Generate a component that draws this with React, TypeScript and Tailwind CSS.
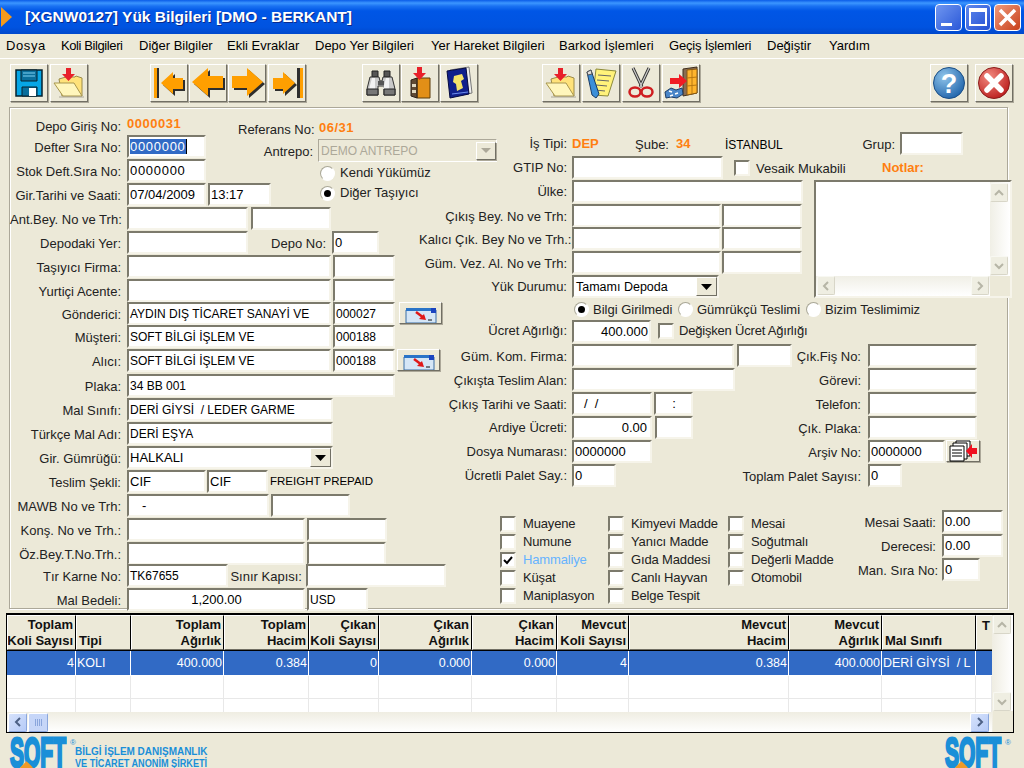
import type { ReactNode } from "react";

const sunken =
  "border-2 border-t-[#7c7a6c] border-l-[#7c7a6c] border-r-[#f6f4ea] border-b-[#f6f4ea] bg-white";
const raised =
  "border border-t-white border-l-white border-r-[#716f64] border-b-[#716f64] shadow-[1px_1px_0_#aca899] bg-[#ece9d8]";
const orange = "font-bold text-[#ff7f10]";

function Lbl({ className = "", children }: { className?: string; children: ReactNode }) {
  return (
    <div className={`shrink-0 whitespace-nowrap text-right pt-[5px] text-[#222] ${className}`}>
      {children}
    </div>
  );
}

function Field({ className = "", children }: { className?: string; children?: ReactNode }) {
  return (
    <div className={`${sunken} h-[23px] shrink-0 flex items-center overflow-hidden whitespace-nowrap pl-px text-black ${className}`}>
      {children}
    </div>
  );
}

function LRow({ label, h = "h-[24px]", lc = "", children }: { label: string; h?: string; lc?: string; children?: ReactNode }) {
  return (
    <div className={`flex ${h}`}>
      <Lbl className={`w-[111px] mr-[6px] ${lc}`}>{label}</Lbl>
      {children}
    </div>
  );
}

function RRow({ label, h = "h-[24px]", lc = "", children }: { label: string; h?: string; lc?: string; children?: ReactNode }) {
  return (
    <div className={`flex ${h}`}>
      <Lbl className={`w-[148px] mr-[5px] ${lc}`}>{label}</Lbl>
      {children}
    </div>
  );
}

// row of the right form part that also has a second label + field at x=868
function PRow({ label, label2, lc = "", field2, children }: { label: string; label2: string; lc?: string; field2: ReactNode; children?: ReactNode }) {
  return (
    <div className="flex h-[24px] w-[558px]">
      <Lbl className={`w-[148px] mr-[5px] ${lc}`}>{label}</Lbl>
      <div className="flex flex-1">{children}</div>
      <Lbl className="mr-[7px]">{label2}</Lbl>
      <div className="w-[109px] shrink-0 flex">{field2}</div>
    </div>
  );
}

function Radio({ on = false }: { on?: boolean }) {
  return (
    <span className="w-[15px] h-[15px] shrink-0 rounded-full bg-white border border-[#a9a796] border-b-white border-r-white flex items-center justify-center">
      {on && <span className="w-[7px] h-[7px] rounded-full bg-black" />}
    </span>
  );
}

function Check({ on = false }: { on?: boolean }) {
  return (
    <span className={`${sunken} w-[16px] h-[16px] shrink-0 flex items-center justify-center`}>
      {on && (
        <svg width="10" height="10" viewBox="0 0 10 10">
          <path d="M1 5l3 3 5-6" fill="none" stroke="#000" strokeWidth="2" />
        </svg>
      )}
    </span>
  );
}

function CheckRow({ label, on, className = "" }: { label: string; on?: boolean; className?: string }) {
  return (
    <div className="flex h-[18px] items-center">
      <Check on={on} />
      <span className={`ml-[7px] whitespace-nowrap tracking-[-0.15px] text-[#222] ${className}`}>{label}</span>
    </div>
  );
}

function DropBtn() {
  return (
    <span className={`${raised} ml-auto w-[21px] h-[19px] shrink-0 flex items-center justify-center`}>
      <svg width="11" height="6" viewBox="0 0 11 6">
        <path d="M0 0h11L5.500 6z" fill="#000" />
      </svg>
    </span>
  );
}

function Chevron({ d, color = "#b6b5a6" }: { d: string; color?: string }) {
  return (
    <svg width="10" height="10" viewBox="0 0 10 10">
      <path d={d} fill="none" stroke={color} strokeWidth="2" />
    </svg>
  );
}

const up = "M1 7l4-4 4 4";
const down = "M1 3l4 4 4-4";
const left = "M7 1L3 5l4 4";
const right = "M3 1l4 4-4 4";

function GhostBtn({ d }: { d: string }) {
  return (
    <span className="w-[18px] h-[19px] shrink-0 rounded-[2px] border border-[#f8f8f2] border-r-[#d8d6c8] border-b-[#d8d6c8] bg-[#efeee2] flex items-center justify-center">
      <Chevron d={d} />
    </span>
  );
}

function BlueBtn({ d }: { d: string }) {
  return (
    <span className="w-[19px] h-[19px] shrink-0 rounded-[2px] border border-white border-r-[#8aa6dc] border-b-[#8aa6dc] bg-[linear-gradient(135deg,#d6e2fb,#b6cbf8)] flex items-center justify-center">
      <Chevron d={d} color="#4d6185" />
    </span>
  );
}

function ToolBtn({ className = "", children }: { className?: string; children: ReactNode }) {
  return (
    <div className={`${raised} w-[38px] h-[38px] shrink-0 flex items-center justify-center ${className}`}>
      {children}
    </div>
  );
}

function SaveIcon() {
  return (
    <svg width="32" height="32" viewBox="0 0 32 32">
      <path d="M3 3h26v26H3z" fill="#06a6e6" stroke="#06222e" strokeWidth="1.500" />
      <path d="M8 3h16v11H8z" fill="#0a6f9c" stroke="#06222e" />
      <path d="M10 6h12M10 9h12" stroke="#7fd2f2" />
      <path d="M9 20h15v9H9z" fill="#0a6f9c" stroke="#06222e" />
      <path d="M16 21h7v8h-7z" fill="#fff" />
    </svg>
  );
}

function FolderIcon() {
  return (
    <svg width="34" height="32" viewBox="0 0 34 32">
      <path d="M7 12l7-2h9l1-1 6 2v18H10z" fill="#ffe27a" stroke="#9a8a48" />
      <path d="M2 16h20l8 13H11z" fill="#fff6bc" stroke="#a8964e" />
      <path d="M14 1h5v6h4l-6.500 7L10 7h4z" fill="#e8202a" />
      <path d="M7 30h25" stroke="#aca899" />
    </svg>
  );
}

function NavIcon({ kind }: { kind: "first" | "prev" | "next" | "last" }) {
  const arrow = {
    first: "10,18 22,7 22,13 32,13 32,24 22,24 22,29",
    prev: "2,17 18,3 18,11 33,11 33,23 18,23 18,31",
    next: "34,17 18,3 18,11 3,11 3,23 18,23 18,31",
    last: "26,18 14,7 14,13 4,13 4,24 14,24 14,29",
  }[kind];
  return (
    <svg width="36" height="36" viewBox="0 0 36 36">
      <polygon points={arrow} fill="#2e2e2e" transform="translate(2,2)" />
      <polygon points={arrow} fill="#ff9f00" />
      {kind === "first" && (
        <>
          <rect x="3" y="3" width="3" height="30" fill="#ff9f00" />
          <rect x="6" y="3" width="2" height="30" fill="#2e2e2e" />
        </>
      )}
      {kind === "last" && (
        <>
          <rect x="28" y="3" width="3" height="30" fill="#2e2e2e" />
          <rect x="31" y="3" width="3" height="30" fill="#ff9f00" />
        </>
      )}
    </svg>
  );
}

function BinocularsIcon() {
  return (
    <svg width="34" height="32" viewBox="0 0 34 32">
      <path d="M8 4h6v6H8zM20 4h6v6h-6z" fill="#555" stroke="#222" />
      <path d="M6 10h9l1 4h2l1-4h9l3 12v6H20v-9h-6v9H3v-6z" fill="#c9c9c9" stroke="#333" />
      <path d="M8 11h3v11H5zM22 11h3v11h-6z" fill="#f2f2f2" />
      <path d="M3 22h11v6H3zM20 22h11v6H20z" fill="#777" stroke="#222" />
      <path d="M14 14h6v4h-6z" fill="#555" />
    </svg>
  );
}

function BoxIcon() {
  return (
    <svg width="30" height="34" viewBox="0 0 30 34">
      <path d="M12 12h13v20H12z" fill="#e28f17" stroke="#5d3c0a" />
      <path d="M6 14l6-2v20l-6-2z" fill="#5f4a34" stroke="#2b2018" />
      <path d="M7 18h4v3H7zM7 24h4v3H7z" fill="#e0d8c0" />
      <path d="M12 1h5v6h4l-6.500 7L8 7h4z" fill="#e8202a" />
    </svg>
  );
}

function BookIcon() {
  return (
    <svg width="30" height="34" viewBox="0 0 30 34">
      <path d="M6 4l19-3 3 26-20 4z" fill="#eee" stroke="#777" />
      <path d="M3 5l19-3 3 26-19 4z" fill="#10208c" stroke="#050a40" />
      <path d="M10 10l8-2 2 5-3 2 2 7-6 3-1-7-3-2z" fill="#f5e36a" />
      <path d="M8 28l16-2" stroke="#6d8df0" />
    </svg>
  );
}

function NoteIcon() {
  return (
    <svg width="34" height="34" viewBox="0 0 34 34">
      <path d="M12 3l20 2-8 25-15-1z" fill="#fff27a" stroke="#8c8a3a" />
      <path d="M14 9l13 1M13 14l12 1M12 19l11 1M11 24l10 1" stroke="#666" />
      <path d="M3 6l4-2 8 24-3 4-4-3z" fill="#3c8fd8" stroke="#1b3c66" />
      <path d="M3 6l4-2 1 4-4 1z" fill="#ddd" stroke="#555" />
    </svg>
  );
}

function ScissorsIcon() {
  return (
    <svg width="30" height="34" viewBox="0 0 30 34">
      <path d="M7 2l9 19M23 2l-9 19" stroke="#333" strokeWidth="3" />
      <path d="M7 2l9 19M23 2l-9 19" stroke="#ccc" strokeWidth="1.200" />
      <ellipse cx="9" cy="26" rx="5.500" ry="4.500" fill="none" stroke="#cf1d20" strokeWidth="2.500" />
      <ellipse cx="21" cy="26" rx="5.500" ry="4.500" fill="none" stroke="#cf1d20" strokeWidth="2.500" />
    </svg>
  );
}

function DoorIcon() {
  return (
    <svg width="36" height="34" viewBox="0 0 36 34">
      <path d="M20 3l14-2v26l-14 3z" fill="#8a6d52" stroke="#3f2e1e" />
      <path d="M24 4l10-1v24l-10 2z" fill="#ffb52e" stroke="#8a5a10" />
      <path d="M29 4v24M24 12l10-1M24 20l10-1" stroke="#b87812" />
      <path d="M7 12h9V8l8 7-8 7v-4H7z" fill="#f01c24" />
      <path d="M2 26l6-4 5 2 6-2 1 6-6 4-6-1-5 1z" fill="#4a86c8" stroke="#1c3c66" />
      <path d="M6 25l3 1M12 28l3-1M7 30l3-1" stroke="#fff" strokeWidth="1.500" />
    </svg>
  );
}

function HelpIcon() {
  return (
    <svg width="34" height="34" viewBox="0 0 34 34">
      <defs>
        <radialGradient id="hb" cx="0.350" cy="0.300" r="0.800">
          <stop offset="0" stopColor="#8fc4ea" />
          <stop offset="1" stopColor="#1a5fa8" />
        </radialGradient>
      </defs>
      <circle cx="17" cy="17" r="15.500" fill="url(#hb)" stroke="#1c4f86" />
      <text x="17" y="27" textAnchor="middle" fontSize="27" fontWeight="700" fill="#fff">?</text>
    </svg>
  );
}

function CloseIcon() {
  return (
    <svg width="34" height="34" viewBox="0 0 34 34">
      <defs>
        <radialGradient id="cb" cx="0.350" cy="0.300" r="0.800">
          <stop offset="0" stopColor="#f28a80" />
          <stop offset="1" stopColor="#b81818" />
        </radialGradient>
      </defs>
      <circle cx="17" cy="17" r="15.500" fill="url(#cb)" stroke="#8a1c1c" />
      <path d="M10 10l14 14M24 10L10 24" stroke="#fff" strokeWidth="5.500" strokeLinecap="round" />
    </svg>
  );
}

function WinArrowIcon() {
  return (
    <svg width="32" height="16" viewBox="0 0 32 16">
      <path d="M1 3h30v13H1z" fill="#d5e6f6" stroke="#3a6ea5" />
      <path d="M1 1h30v3H1z" fill="#2a74c8" />
      <path d="M26 1h5v5h-5z" fill="#1a44c0" />
      <path d="M11 5l8 6" stroke="#e01818" strokeWidth="2.500" />
      <path d="M21 13l-7-1 5-5z" fill="#e01818" />
      <path d="M23 13h4" stroke="#111" />
    </svg>
  );
}

function DocsIcon() {
  return (
    <svg width="30" height="22" viewBox="0 0 30 22">
      <path d="M8 1h14v15H8z" fill="#fff" stroke="#000" />
      <path d="M5 3h14v16H5z" fill="#fff" stroke="#000" />
      <path d="M2 6h14v15H2z" fill="#fff" stroke="#000" />
      <path d="M4 10h10M4 13h10M4 16h10" stroke="#000" />
      <path d="M29 8v6h-5v4l-6-7 6-7v4z" fill="#f01020" />
    </svg>
  );
}

function Logo() {
  return (
    <div className="relative w-[64px] h-[30px] shrink-0">
      <span className="block w-[56px] origin-top-left scale-x-[0.5] text-[42px] leading-[30px] font-bold whitespace-nowrap text-[#1a8fd8] [-webkit-text-stroke:3px_#1a8fd8]">
        SOFT
      </span>
      <span className="absolute left-[12px] top-[25px] w-[9px] h-[9px] rotate-45 bg-[#f09a28]" />
      <span className="absolute right-[-2px] top-[1px] text-[8px] leading-[8px] text-[#1a8fd8]">®</span>
    </div>
  );
}

const menus = [
  { name: "Dosya", className: "w-[40px] tracking-[0.6px]" },
  { name: "Koli Bilgileri", className: "w-[63px] tracking-[-0.4px]" },
  { name: "Diğer Bilgiler", className: "w-[73px]" },
  { name: "Ekli Evraklar", className: "w-[73px]" },
  { name: "Depo Yer Bilgileri", className: "w-[101px]" },
  { name: "Yer Hareket Bilgileri", className: "w-[113px]" },
  { name: "Barkod İşlemleri", className: "w-[95px] tracking-[0.1px]" },
  { name: "Geçiş İşlemleri", className: "w-[83px] tracking-[-0.2px]" },
  { name: "Değiştir", className: "w-[47px]" },
  { name: "Yardım", className: "w-[41px]" },
];

const columns = [
  { top: "Toplam", bottom: "Koli Sayısı", value: "4" },
  { top: "", bottom: "Tipi", value: "KOLI", start: true },
  { top: "Toplam", bottom: "Ağırlık", value: "400.000" },
  { top: "Toplam", bottom: "Hacim", value: "0.384" },
  { top: "Çıkan", bottom: "Koli Sayısı", value: "0" },
  { top: "Çıkan", bottom: "Ağırlık", value: "0.000" },
  { top: "Çıkan", bottom: "Hacim", value: "0.000" },
  { top: "Mevcut", bottom: "Koli Sayısı", value: "4" },
  { top: "Mevcut", bottom: "Hacim", value: "0.384" },
  { top: "Mevcut", bottom: "Ağırlık", value: "400.000" },
  { top: "", bottom: "Mal Sınıfı", value: "DERİ GİYSİ  / L", start: true },
  { top: "T", bottom: "", value: "" },
];
const gridCols =
  "grid grid-cols-[69px_55px_93px_85px_70px_93px_85px_72px_160px_93px_94px_16px]";

export default function App() {
  return (
    <div className="w-[1024px] h-[768px] overflow-hidden flex flex-col bg-[#ece9d8] text-[13px] leading-[16px] font-['Liberation_Sans',Arial,sans-serif]">
      {/* Title bar */}
      <div className="h-[34px] shrink-0 flex items-center bg-[linear-gradient(180deg,#0a5ce8_0%,#3c96ff_9%,#1a72f2_18%,#0056e6_32%,#0053e0_80%,#0048cc_100%)]">
        <svg width="12" height="20" viewBox="0 0 12 20" className="ml-px">
          <path d="M0 0l11 10L0 20z" fill="#f49a1c" />
        </svg>
        <span className="ml-[12px] text-[15.500px] font-bold text-white [text-shadow:1px_1px_0_#0a2a8c] whitespace-nowrap">
          [XGNW0127] Yük Bilgileri [DMO - BERKANT]
        </span>
        <div className="ml-auto mr-[3px] flex gap-[3px]">
          <div className="w-[27px] h-[27px] rounded-[4px] border border-white bg-[linear-gradient(135deg,#6f96f0,#2a58d8)] flex items-end p-[4px] pl-[5px]">
            <span className="w-[11px] h-[3px] bg-white" />
          </div>
          <div className="w-[26px] h-[27px] rounded-[4px] border border-white bg-[linear-gradient(135deg,#5f88ec,#2450d4)] flex items-center justify-center">
            <span className="w-[18px] h-[18px] border-2 border-t-[4px] border-white" />
          </div>
          <div className="w-[27px] h-[27px] rounded-[4px] border border-white bg-[linear-gradient(135deg,#ef9a7c,#c8401a)] flex items-center justify-center">
            <svg width="19" height="19" viewBox="0 0 19 19">
              <path d="M2 2l15 15M17 2L2 17" stroke="#fff" strokeWidth="3.500" />
            </svg>
          </div>
        </div>
      </div>

      {/* Menu */}
      <div className="h-[25px] shrink-0 flex items-center gap-[15px] pl-[6px] border-b border-white text-black">
        {menus.map((m) => (
          <span key={m.name} className={`whitespace-nowrap ${m.className}`}>{m.name}</span>
        ))}
      </div>

      {/* Toolbar */}
      <div className="h-[48px] shrink-0 flex pl-[10px] pt-[5px]">
        <ToolBtn><SaveIcon /></ToolBtn>
        <ToolBtn className="ml-[2px]"><FolderIcon /></ToolBtn>
        <ToolBtn className="ml-[62px]"><NavIcon kind="first" /></ToolBtn>
        <ToolBtn className="ml-px"><NavIcon kind="prev" /></ToolBtn>
        <ToolBtn className="ml-px"><NavIcon kind="next" /></ToolBtn>
        <ToolBtn className="ml-[2px]"><NavIcon kind="last" /></ToolBtn>
        <ToolBtn className="ml-[56px]"><BinocularsIcon /></ToolBtn>
        <ToolBtn className="ml-px"><BoxIcon /></ToolBtn>
        <ToolBtn className="ml-px"><BookIcon /></ToolBtn>
        <ToolBtn className="ml-[64px]"><FolderIcon /></ToolBtn>
        <ToolBtn className="ml-[2px]"><NoteIcon /></ToolBtn>
        <ToolBtn className="ml-[2px]"><ScissorsIcon /></ToolBtn>
        <ToolBtn className="ml-[2px]"><DoorIcon /></ToolBtn>
        <ToolBtn className="ml-[230px]"><HelpIcon /></ToolBtn>
        <ToolBtn className="ml-[7px]"><CloseIcon /></ToolBtn>
      </div>

      {/* Form panel */}
      <div className="ml-[9px] w-[999px] h-[502px] shrink-0 flex border border-[#aca899] shadow-[inset_1px_1px_0_#fff,1px_1px_0_#fff]">
        {/* Left part */}
        <div className="w-[409px] shrink-0">
          <div className="flex h-[99px]">
            <div className="w-[228px] shrink-0 pt-[8px]">
              <LRow label="Depo Giriş No:" h="h-[19px]" lc="!pt-[3px]">
                <span className={`${orange} tracking-[0.5px]`}>0000031</span>
              </LRow>
              <LRow label="Defter Sıra No:">
                <Field className="w-[79px]">
                  <span className="bg-[#316ac5] text-white tracking-[0.7px] leading-[15px] border-r border-black">0000000</span>
                </Field>
              </LRow>
              <LRow label="Stok Deft.Sıra No:">
                <Field className="w-[79px] tracking-[0.7px]">0000000</Field>
              </LRow>
              <LRow label="Gir.Tarihi ve Saati:">
                <Field className="w-[79px]">07/04/2009</Field>
                <Field className="w-[63px] ml-[2px]">13:17</Field>
              </LRow>
            </div>
            <div className="pt-[11px]">
              <div className="flex h-[20px]">
                <Lbl className="w-[75px] mr-[6px] !pt-[3px]">Referans No:</Lbl>
                <span className={`${orange} tracking-[0.5px] pt-px`}>06/31</span>
              </div>
              <div className="flex h-[24px]">
                <Lbl className="w-[75px] mr-[5px]">Antrepo:</Lbl>
                <div className="w-[179px] h-[23px] flex items-center border border-[#aca899] border-r-white border-b-white pl-[2px] text-[12px] text-[#aca899]">
                  DEMO ANTREPO
                  <span className={`${raised} ml-auto w-[20px] h-[18px] flex items-center justify-center`}>
                    <svg width="10" height="5" viewBox="0 0 10 5">
                      <path d="M0 0h10L5 5z" fill="#aca899" />
                    </svg>
                  </span>
                </div>
              </div>
              <div className="flex h-[20px] items-center pl-[82px]">
                <Radio />
                <span className="ml-[5px] text-[#222] whitespace-nowrap">Kendi Yükümüz</span>
              </div>
              <div className="flex h-[20px] items-center pl-[82px]">
                <Radio on />
                <span className="ml-[5px] text-[#222] whitespace-nowrap">Diğer Taşıyıcı</span>
              </div>
            </div>
          </div>

          <LRow label="Ant.Bey. No ve Trh:">
            <Field className="w-[121px]" />
            <Field className="w-[80px] ml-[3px]" />
          </LRow>
          <LRow label="Depodaki Yer:">
            <Field className="w-[121px]" />
            <Lbl className="w-[78px] mr-[6px]">Depo No:</Lbl>
            <Field className="w-[47px]">0</Field>
          </LRow>
          <LRow label="Taşıyıcı Firma:">
            <Field className="w-[204px]" />
            <Field className="w-[62px] ml-[2px]" />
          </LRow>
          <LRow label="Yurtiçi Acente:" h="h-[23px]">
            <Field className="w-[204px]" />
            <Field className="w-[62px] ml-[2px]" />
          </LRow>
          <LRow label="Gönderici:" h="h-[23px]">
            <Field className="w-[204px] text-[12px]">AYDIN DIŞ TİCARET SANAYİ VE</Field>
            <Field className="w-[62px] ml-[2px] text-[12px]">000027</Field>
            <div className={`${raised} w-[43px] h-[22px] ml-[4px] shrink-0 flex items-end justify-center overflow-hidden`}>
              <WinArrowIcon />
            </div>
          </LRow>
          <LRow label="Müşteri:">
            <Field className="w-[204px] text-[12px]">SOFT BİLGİ İŞLEM VE</Field>
            <Field className="w-[62px] ml-[2px] text-[12px]">000188</Field>
          </LRow>
          <LRow label="Alıcı:" h="h-[25px]">
            <Field className="w-[204px] text-[12px]">SOFT BİLGİ İŞLEM VE</Field>
            <Field className="w-[62px] ml-[2px] text-[12px]">000188</Field>
            <div className={`${raised} w-[43px] h-[22px] ml-[2px] shrink-0 flex items-end justify-center overflow-hidden`}>
              <WinArrowIcon />
            </div>
          </LRow>
          <LRow label="Plaka:">
            <Field className="w-[268px] text-[12px]">34 BB 001</Field>
          </LRow>
          <LRow label="Mal Sınıfı:">
            <Field className="w-[206px] text-[12px]">DERİ GİYSİ&nbsp; / LEDER GARME</Field>
          </LRow>
          <LRow label="Türkçe Mal Adı:">
            <Field className="w-[206px] text-[12px]">DERİ EŞYA</Field>
          </LRow>
          <LRow label="Gir. Gümrüğü:">
            <Field className="w-[206px]">
              HALKALI
              <DropBtn />
            </Field>
          </LRow>
          <LRow label="Teslim Şekli:">
            <Field className="w-[79px]">CIF</Field>
            <Field className="w-[61px] ml-px">CIF</Field>
            <span className="ml-[2px] pt-[3px] whitespace-nowrap text-black text-[11.500px]">FREIGHT PREPAID</span>
          </LRow>
          <LRow label="MAWB No ve Trh:">
            <Field className="w-[142px]">
              <span className="pl-[12px]">-</span>
            </Field>
            <Field className="w-[79px] ml-[2px]" />
          </LRow>
          <LRow label="Konş. No ve Trh.:">
            <Field className="w-[178px]" />
            <Field className="w-[80px] ml-[2px]" />
          </LRow>
          <LRow label="Öz.Bey.T.No.Trh.:" h="h-[22px]">
            <Field className="w-[178px]" />
            <Field className="w-[79px] ml-[2px]" />
          </LRow>
          <LRow label="Tır Karne No:">
            <Field className="w-[101px] text-[12px]">TK67655</Field>
            <Lbl className="w-[74px] mr-[4px]">Sınır Kapısı:</Lbl>
            <Field className="w-[140px]" />
          </LRow>
          <LRow label="Mal Bedeli:" h="h-[22px]">
            <Field className="w-[178px] justify-center">1,200.00</Field>
            <Field className="w-[61px] ml-[2px] text-[12px]">USD</Field>
          </LRow>
        </div>

        {/* Right part */}
        <div className="pt-[24px] w-[589px] shrink-0">
          <div className="flex h-[24px] w-[544px]">
            <Lbl className="w-[148px] mr-[5px] !pt-[4px]">İş Tipi:</Lbl>
            <span className={`${orange} pt-[4px] w-[63px]`}>DEP</span>
            <span className="pt-[5px] text-[#222]">Şube:</span>
            <span className={`${orange} pt-[4px] ml-[7px] w-[49px]`}>34</span>
            <span className="pt-[5px] text-black text-[12px]">İSTANBUL</span>
            <span className="pt-[5px] ml-auto mr-[5px] text-[#222]">Grup:</span>
            <Field className="w-[63px]" />
          </div>
          <RRow label="GTIP No:" lc="!pt-[4px]">
            <Field className="w-[151px]" />
            <span className="ml-[11px] mt-[4px]"><Check /></span>
            <span className="ml-[6px] pt-[5px] w-[126px] whitespace-nowrap text-[#222]">Vesaik Mukabili</span>
            <span className={`${orange} pt-[4px]`}>Notlar:</span>
          </RRow>
          <div className="flex">
            <div className="w-[395px] shrink-0">
              <RRow label="Ülke:" lc="!pt-[4px]">
                <Field className="w-[231px]" />
              </RRow>
              <RRow label="Çıkış Bey. No ve Trh:" h="h-[23px]">
                <Field className="w-[149px]" />
                <Field className="w-[80px] ml-px" />
              </RRow>
              <RRow label="Kalıcı Çık. Bey No ve Trh.:">
                <Field className="w-[149px]" />
                <Field className="w-[80px] ml-px" />
              </RRow>
              <RRow label="Güm. Vez. Al. No ve Trh:">
                <Field className="w-[149px]" />
                <Field className="w-[80px] ml-px" />
              </RRow>
              <RRow label="Yük Durumu:" lc="!pt-[4px]">
                <Field className="w-[147px] !pl-[2px] text-[12.500px]">
                  Tamamı Depoda
                  <DropBtn />
                </Field>
              </RRow>
            </div>
            <div className="w-[198px] h-[118px] shrink-0 grid grid-cols-[1fr_20px] grid-rows-[1fr_20px] border-2 border-t-[#7c7a6c] border-l-[#7c7a6c] border-r-[#f6f4ea] border-b-[#f6f4ea]">
              <div className="bg-white" />
              <div className="row-span-1 bg-[linear-gradient(90deg,#f0efe6,#fff)] flex flex-col justify-between py-px">
                <GhostBtn d={up} />
                <GhostBtn d={down} />
              </div>
              <div className="bg-[linear-gradient(180deg,#f0efe6,#fff)] flex justify-between pl-px pr-px">
                <GhostBtn d={left} />
                <GhostBtn d={right} />
              </div>
              <div className="bg-[#ece9d8]" />
            </div>
          </div>

          <div className="flex h-[21px] items-center pl-[155px]">
            <div className="w-[104px] flex items-center"><Radio on /><span className="ml-[4px] text-[#222] whitespace-nowrap">Bilgi Girilmedi</span></div>
            <div className="w-[128px] flex items-center"><Radio /><span className="ml-[4px] text-[#222] whitespace-nowrap">Gümrükçü Teslimi</span></div>
            <div className="flex items-center"><Radio /><span className="ml-[4px] text-[#222] whitespace-nowrap">Bizim Teslimimiz</span></div>
          </div>
          <RRow label="Ücret Ağırlığı:" lc="!pt-[3px]">
            <Field className="w-[79px] justify-end pr-[1px]">400.000</Field>
            <span className="ml-[7px] mt-[3px]"><Check /></span>
            <span className="ml-[5px] pt-[3px] whitespace-nowrap text-[#222] tracking-[-0.2px]">Değişken Ücret Ağırlığı</span>
          </RRow>

          <PRow label="Güm. Kom. Firma:" label2="Çık.Fiş No:" field2={<Field className="w-[109px]" />}>
            <Field className="w-[162px]" />
            <Field className="w-[55px] ml-[3px]" />
          </PRow>
          <PRow label="Çıkışta Teslim Alan:" label2="Görevi:" field2={<Field className="w-[109px]" />}>
            <Field className="w-[163px]" />
          </PRow>
          <PRow label="Çıkış Tarihi ve Saati:" label2="Telefon:" field2={<Field className="w-[109px]" />}>
            <Field className="w-[80px] !pl-[10px]">/&nbsp;&nbsp;/</Field>
            <Field className="w-[39px] ml-[2px] justify-center">:</Field>
          </PRow>
          <PRow label="Ardiye Ücreti:" lc="!pt-[4px]" label2="Çık. Plaka:" field2={<Field className="w-[109px]" />}>
            <Field className="w-[80px] justify-end pr-[3px]">0.00</Field>
            <Field className="w-[38px] ml-[3px]" />
          </PRow>
          <PRow
            label="Dosya Numarası:"
            lc="!pt-[4px]"
            label2="Arşiv No:"
            field2={
              <>
                <Field className="w-[77px]">0000000</Field>
                <div className={`${raised} w-[34px] h-[22px] ml-px shrink-0 flex items-center justify-center`}>
                  <DocsIcon />
                </div>
              </>
            }
          >
            <Field className="w-[80px]">0000000</Field>
          </PRow>
          <PRow label="Ücretli Palet Say.:" lc="!pt-[4px]" label2="Toplam Palet Sayısı:" field2={<Field className="w-[34px]">0</Field>}>
            <Field className="w-[44px]">0</Field>
          </PRow>

          <div className="flex mt-[22px] pl-[81px]">
            <div className="w-[108px] pt-[5px]">
              <CheckRow label="Muayene" />
              <CheckRow label="Numune" />
              <CheckRow label="Hammaliye" on className="!text-[#66b3ff]" />
              <CheckRow label="Küşat" />
              <CheckRow label="Maniplasyon" />
            </div>
            <div className="w-[120px] pt-[5px]">
              <CheckRow label="Kimyevi Madde" />
              <CheckRow label="Yanıcı Madde" />
              <CheckRow label="Gıda Maddesi" />
              <CheckRow label="Canlı Hayvan" />
              <CheckRow label="Belge Tespit" />
            </div>
            <div className="w-[130px] pt-[5px]">
              <CheckRow label="Mesai" />
              <CheckRow label="Soğutmalı" />
              <CheckRow label="Değerli Madde" />
              <CheckRow label="Otomobil" />
            </div>
            <div>
              <div className="flex h-[24px]">
                <Lbl className="w-[78px] mr-[6px]">Mesai Saati:</Lbl>
                <Field className="w-[61px]">0.00</Field>
              </div>
              <div className="flex h-[24px]">
                <Lbl className="w-[78px] mr-[6px]">Derecesi:</Lbl>
                <Field className="w-[61px]">0.00</Field>
              </div>
              <div className="flex h-[24px]">
                <Lbl className="w-[78px] mr-[6px]">Man. Sıra No:</Lbl>
                <Field className="w-[38px]">0</Field>
              </div>
            </div>
          </div>
        </div>
      </div>

      {/* Grid */}
      <div className="ml-[6px] mt-[4px] w-[1008px] h-[120px] shrink-0 flex border border-t-2 border-black overflow-hidden">
        <div className="w-[985px] shrink-0 flex flex-col">
          <div className={`${gridCols} h-[36px] shrink-0 border-b border-black font-bold text-[13px] text-[#111] leading-[16px]`}>
            {columns.map((c, i) => (
              <div
                key={i}
                className={`${raised} !shadow-none flex flex-col overflow-hidden whitespace-nowrap px-[2px] ${c.bottom ? "justify-end border-r-black" : "justify-start pt-[2px] !border-r-0"} ${c.start ? "items-start" : "items-end"}`}
              >
                {c.top && <span>{c.top}</span>}
                {c.bottom && <span>{c.bottom}</span>}
              </div>
            ))}
          </div>
          <div className={`${gridCols} h-[24px] shrink-0 bg-[#316ac5] text-white text-[12.500px]`}>
            {columns.map((c, i) => (
              <div key={i} className={`flex items-center overflow-hidden whitespace-pre px-[1px] pb-[1px] ${c.value ? "border-r border-white" : ""} ${c.start ? "justify-start" : "justify-end"}`}>
                {c.value}
              </div>
            ))}
          </div>
          <div className={`${gridCols} h-[24px] shrink-0 bg-white border-t border-white border-b-[#e8e8e8] border-b`}>
            {columns.map((c, i) => (
              <div key={i} className="border-r border-[#e8e8e8]" />
            ))}
          </div>
          <div className={`${gridCols} h-[13px] shrink-0 bg-white`}>
            {columns.map((c, i) => (
              <div key={i} className="border-r border-[#e8e8e8]" />
            ))}
          </div>
          <div className="flex-1 flex items-center px-px bg-[linear-gradient(180deg,#efede2,#fff)]">
            <BlueBtn d={left} />
            <span className="ml-px w-[20px] h-[19px] rounded-[2px] border border-white border-r-[#8aa6dc] border-b-[#8aa6dc] bg-[#c6d6f8] flex items-center justify-center">
              <span className="w-[7px] h-[7px] bg-[repeating-linear-gradient(90deg,#8aa6dc_0,#8aa6dc_1px,transparent_1px,transparent_2px)]" />
            </span>
            <span className="ml-auto mr-[2px]"><BlueBtn d={right} /></span>
          </div>
        </div>
        <div className="flex-1 bg-[linear-gradient(90deg,#efede2,#fff)] flex flex-col pl-px">
          <GhostBtn d={up} />
          <div className="h-[58px]" />
          <GhostBtn d={down} />
          <div className="flex-1 bg-[#ece9d8]" />
        </div>
      </div>

      {/* Footer logos */}
      <div className="flex-1 flex pl-[10px] pr-[15px] pt-[5px] overflow-hidden">
        <Logo />
        <div className="ml-px mt-[8px] w-[131px] font-bold text-[#1a8fd8] text-[10.500px] leading-[11.500px] whitespace-nowrap">
          <div className="origin-top-left scale-x-[0.95]">BİLGİ İŞLEM DANIŞMANLIK</div>
          <div className="origin-top-left scale-x-[0.87]">VE TİCARET ANONİM ŞİRKETİ</div>
        </div>
        <div className="ml-auto"><Logo /></div>
      </div>
    </div>
  );
}
